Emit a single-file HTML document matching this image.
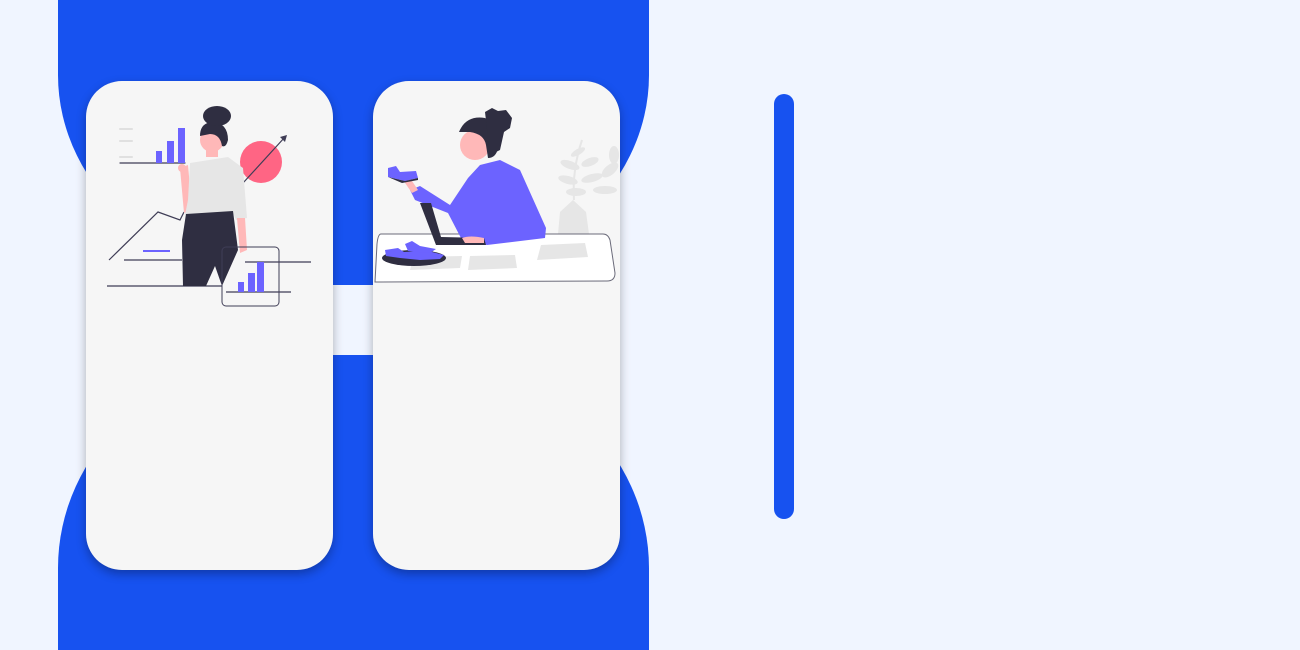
<!DOCTYPE html>
<html><head><meta charset="utf-8"><style>
html,body{margin:0;padding:0;}
body{width:1300px;height:650px;background:#f0f5ff;position:relative;overflow:hidden;font-family:"Liberation Sans",sans-serif;}
.card{position:absolute;top:81px;width:247px;height:489px;background:#f6f6f6;border-radius:36px;box-shadow:0 4px 10px rgba(0,0,0,0.3);overflow:hidden;}
.bar{position:absolute;left:774px;top:94px;width:20px;height:425px;border-radius:10px;background:#1752f0;}
svg{position:absolute;left:0;top:0;}
</style></head><body>
<svg width="1300" height="650" viewBox="0 0 1300 650">
<path d="M58 0 L649 0 L649 75 A248 210 0 0 1 401 285 L306 285 A248 210 0 0 1 58 75 Z" fill="#1752f0"/>
<path d="M58 650 L58 568 A233 213 0 0 1 291 355 L416 355 A233 213 0 0 1 649 568 L649 650 Z" fill="#1752f0"/>
</svg>
<div class="card" style="left:86px"></div>
<div class="card" style="left:373px"></div>
<div class="bar"></div>
<svg width="1300" height="650" viewBox="0 0 1300 650">
<g stroke-linecap="round">
<line x1="120" y1="129" x2="132" y2="129" stroke="#e0e0e0" stroke-width="2"/>
<line x1="120" y1="141" x2="132" y2="141" stroke="#e0e0e0" stroke-width="2"/>
<line x1="120" y1="157" x2="132" y2="157" stroke="#e0e0e0" stroke-width="2"/>
<line x1="120" y1="163" x2="185" y2="163" stroke="#3f3d56" stroke-width="1.2"/>
</g>
<rect x="156" y="151" width="6" height="12" fill="#6c63ff"/>
<rect x="167" y="141" width="7" height="22" fill="#6c63ff"/>
<rect x="178" y="128" width="7" height="35" fill="#6c63ff"/>
<circle cx="261" cy="162" r="21" fill="#ff6584"/>
<line x1="243" y1="183" x2="285" y2="137" stroke="#3f3d56" stroke-width="1.2"/>
<path d="M280 137 L287 135 L285 142 Z" fill="#3f3d56"/>
<polyline points="109,260 158,212 180,220 184,212" fill="none" stroke="#3f3d56" stroke-width="1.2"/>
<line x1="107" y1="286" x2="222" y2="286" stroke="#3f3d56" stroke-width="1.2"/>
<line x1="124" y1="260" x2="182" y2="260" stroke="#3f3d56" stroke-width="1.2"/>
<line x1="143" y1="251" x2="170" y2="251" stroke="#6c63ff" stroke-width="2"/>
<path d="M180 168 L188 165 L192 210 L184 213 Z" fill="#ffb8b8"/>
<circle cx="182" cy="168" r="4" fill="#ffb8b8"/>
<path d="M190 163 L228 157 L243 168 L247 218 L236 220 L233 213 L185 215 L188 200 Z" fill="#e6e6e6"/>
<path d="M237 218 L245 218 L247 250 L240 253 Z" fill="#ffb8b8"/>
<path d="M186 214 L233 211 L238 250 L222 286 L215 266 L206 286 L183 286 L182 240 Z" fill="#2f2e41"/>
<circle cx="212" cy="140" r="12" fill="#ffb8b8"/>
<rect x="206" y="148" width="12" height="9" fill="#ffb8b8"/>
<path d="M200 136 Q200 122 214 122 Q228 124 228 140 Q226 148 222 146 Q220 134 210 134 Z" fill="#2f2e41"/>
<ellipse cx="217" cy="116" rx="14" ry="10" fill="#2f2e41"/>
<rect x="222" y="247" width="57" height="59" rx="4" fill="none" stroke="#3f3d56" stroke-width="1"/>
<line x1="245" y1="262" x2="311" y2="262" stroke="#3f3d56" stroke-width="1.2"/>
<line x1="226" y1="292" x2="291" y2="292" stroke="#3f3d56" stroke-width="1.2"/>
<rect x="238" y="282" width="6" height="10" fill="#6c63ff"/>
<rect x="248" y="273" width="7" height="19" fill="#6c63ff"/>
<rect x="257" y="262" width="7" height="30" fill="#6c63ff"/>
<g fill="#e6e6e6">
<path d="M558 234 L560 212 L573 200 L586 212 L589 234 Z"/>
<path d="M574 200 Q572 170 582 140" stroke="#e6e6e6" stroke-width="2" fill="none"/>
<ellipse cx="578" cy="152" rx="8" ry="3" transform="rotate(-30 578 152)"/>
<ellipse cx="570" cy="165" rx="10" ry="4" transform="rotate(20 570 165)"/>
<ellipse cx="590" cy="162" rx="9" ry="4" transform="rotate(-20 590 162)"/>
<ellipse cx="568" cy="180" rx="10" ry="4" transform="rotate(15 568 180)"/>
<ellipse cx="592" cy="178" rx="11" ry="4" transform="rotate(-15 592 178)"/>
<ellipse cx="576" cy="192" rx="10" ry="4"/>
<ellipse cx="605" cy="190" rx="12" ry="4"/>
<ellipse cx="610" cy="170" rx="10" ry="5" transform="rotate(-40 610 170)"/>
<ellipse cx="614" cy="155" rx="5" ry="9"/>
</g>
<path d="M381 234 L603 234 Q608 234 610 240 L615 273 Q615 281 607 281 L375 282 L377 244 Q378 234 381 234 Z" fill="#fff" stroke="#6b6b7a" stroke-width="1"/>
<path d="M413 257 L462 256 L460 268 L410 270 Z" fill="#e6e6e6"/>
<path d="M470 256 L515 255 L517 268 L468 270 Z" fill="#e6e6e6"/>
<path d="M541 245 L585 243 L588 257 L537 260 Z" fill="#e6e6e6"/>
<path d="M480 165 L500 160 L520 170 L546 228 L545 238 L487 245 L462 240 L448 213 L415 200 L410 190 L420 186 L450 205 L468 178 Z" fill="#6c63ff"/>
<path d="M420 203 L431 203 L441 237 L484 238 L486 245 L436 245 Z" fill="#2f2e41"/>
<path d="M462 238 Q470 235 484 238 L484 243 L465 243 Z" fill="#ffb8b8"/>
<path d="M403 180 L410 178 L418 190 L412 193 Z" fill="#ffb8b8"/>
<path d="M388 168 L396 166 L400 172 L416 171 L418 178 L405 181 L388 177 Z" fill="#6c63ff"/>
<path d="M388 177 L405 181 L418 178 L418 180 L402 183 Z" fill="#2f2e41"/>
<ellipse cx="414" cy="258" rx="32" ry="8" fill="#2f2e41"/>
<path d="M385 250 L398 248 L404 252 L420 251 L432 252 L444 255 L440 259 L420 260 L400 258 L386 256 Z" fill="#6c63ff"/>
<path d="M405 244 L412 241 L420 246 L436 249 L430 253 L408 251 Z" fill="#6c63ff"/>
<circle cx="475" cy="145" r="15" fill="#ffb8b8"/>
<path d="M459 132 Q466 115 485 118 Q500 126 498 148 Q496 158 488 158 L486 145 Q484 134 470 132 Z" fill="#2f2e41"/>
<path d="M485 112 L492 108 L498 111 L506 110 L512 118 L510 128 L504 132 L500 150 L490 155 Z" fill="#2f2e41"/>
</svg>
</body></html>
